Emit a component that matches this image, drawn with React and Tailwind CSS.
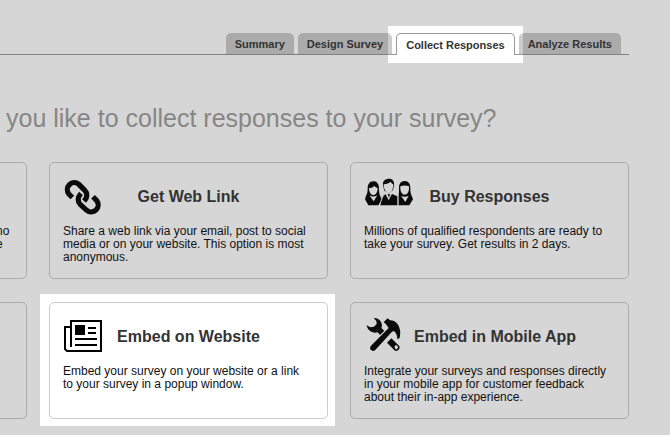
const tabs = [
  { id: "summary", label: "Summary" },
  { id: "design", label: "Design Survey" },
  { id: "collect", label: "Collect Responses" },
  { id: "analyze", label: "Analyze Results" },
];

function LinkIcon() {
  return (
    <svg className="h-[38px] w-[50px]" viewBox="0 0 50 38" fill="none" stroke="#0b0b0b" strokeWidth="5.2" aria-hidden="true">
      <path d="M9.3 19.5L5.9 16.1A7 7 0 0 1 15.8 6.3L21.8 12.3A7 7 0 0 1 21.8 22.1L21 23" />
      <path d="M30 18.8L33.6 22.5A7 7 0 0 1 23.7 32.3L17.2 26.3A7 7 0 0 1 17.2 16.5L18 15.6" />
    </svg>
  );
}

function PeopleIcon() {
  return (
    <svg className="h-[38px] w-[50px]" viewBox="27 24 150 114" fill="#0b0b0b" aria-hidden="true">
      {/* left */}
      <path d="M55 34C43 34 38 44 38 56C38 66 36 72 33 77L30 88L40 106H70L80 92L76 79C73 73 72 66 72 56C72 42 66 34 55 34Z" />
      <path d="M42 54C49 54 55 51 58 47C61 51 64 53 68 54C68 68 62 75 55 75C48 75 42 67 42 54Z" fill="#d6d6d6" />
      <path d="M43 76Q55 83 67 76L56 94Z" fill="#d6d6d6" />
      {/* right */}
      <path d="M149 33C137 33 132 42 132 54C132 66 132 72 130 77V106H163L174 88L170 77C167 72 166 66 166 54C166 42 161 33 149 33Z" />
      <path d="M136 49Q149 44 162 49C163 66 157 74 149 74C141 74 135 66 136 49Z" fill="#d6d6d6" />
      <path d="M138 77Q149 83 161 77L151 96Z" fill="#d6d6d6" />
      <path d="M129 74V107" stroke="#d6d6d6" strokeWidth="3" />
      {/* middle */}
      <path d="M76 106L80 82L92 72H111L127 79V106Z" />
      <path d="M84 46C82 32 91 26 102 26C113 26 119 34 117 48L114 60L102 70L88 62Z" />
      <path d="M86 43C96 42 102 39 106 35C109 39 112 41 115 43C115 59 109 69 101 69C93 69 86 59 86 43Z" fill="#d6d6d6" />
      <path d="M91 71L101 91L111 71L105 68H96Z" fill="#d6d6d6" />
      <path d="M98 72H105L102 83Z" />
      <path d="M84 78L73 106" stroke="#d6d6d6" strokeWidth="3" />
    </svg>
  );
}

function NewspaperIcon() {
  return (
    <svg className="h-[38px] w-[50px]" viewBox="0 0 50 38" fill="none" stroke="#000" strokeWidth="2" aria-hidden="true">
      <path d="M8 29V3H38V33H4L2 31V9H7" />
      <path d="M25 10H33M25 15H33M12 21H34M12 27H34" />
      <path d="M12 7H22V17H12Z" fill="#000" stroke="none" />
    </svg>
  );
}

function ToolsIcon() {
  return (
    <svg className="h-[38px] w-[50px]" viewBox="24 24 150 114" fill="#0b0b0b" aria-hidden="true">
      <path d="M53 24C66 23 78 33 78 47L76 54L85 62L72 75L65 67C50 71 34 62 32 46L43 52L54 50L62 42L61 33Z" />
      <path d="M93 98L106 85L129 107C135 114 126 125 117 122ZM118 106A5 6 0 1 0 124 116A6 6 0 0 0 118 106Z" fillRule="evenodd" />
      <path d="M83 36L95 25L102 31Q117 31 126 44Q136 59 131 84L124 88Q124 72 114 63L108 65L60 118Q54 126 46 121Q39 115 45 107L98 54L90 43Z" />
    </svg>
  );
}

const cards = [
  { id: "cut-top", lines: ["no", "e"] },
  {
    id: "link",
    title: "Get Web Link",
    icon: LinkIcon,
    text: "Share a web link via your email, post to social media or on your website. This option is most anonymous.",
  },
  {
    id: "buy",
    title: "Buy Responses",
    icon: PeopleIcon,
    text: "Millions of qualified respondents are ready to take your survey. Get results in 2 days.",
  },
  { id: "cut-bottom", lines: [] },
  {
    id: "website",
    title: "Embed on Website",
    icon: NewspaperIcon,
    text: "Embed your survey on your website or a link to your survey in a popup window.",
    spotlight: true,
  },
  {
    id: "mobile",
    title: "Embed in Mobile App",
    icon: ToolsIcon,
    text: "Integrate your surveys and responses directly in your mobile app for customer feedback about their in-app experience.",
  },
];

function Card({ card }) {
  const Icon = card.icon;

  // Cards on the left edge only show the end of their text
  if (card.lines) {
    return (
      <div className="min-h-[117px] rounded-[5px] border border-black/20 pt-[62px] pl-[247px] text-xs leading-[13px] text-[#111]">
        {card.lines.map((line) => (
          <p key={line}>{line}</p>
        ))}
      </div>
    );
  }

  return (
    <a href={`#${card.id}`} className="relative block min-h-[117px] rounded-[5px] border border-black/20 px-[13px] pt-[15px]">
      {card.spotlight && <span className="absolute -top-[9px] -right-2 -bottom-2 -left-[10px] -z-10 bg-white" />}
      <div className="grid grid-cols-[1fr_auto_1fr] items-center">
        <Icon />
        <h2 className="text-base font-bold whitespace-nowrap text-[#333]">{card.title}</h2>
      </div>
      <p className="mt-[9px] pr-1 text-xs leading-[13px] text-[#111]">{card.text}</p>
    </a>
  );
}

export default function App() {
  const activeTab = "collect";

  return (
    <div className="isolate min-h-screen overflow-hidden bg-[#d6d6d6] font-['Liberation_Sans',Arial,sans-serif]">
      <nav className="mr-[41px] flex items-end justify-end gap-1 border-b border-black/40 pt-[33px] pr-2 text-[11px] leading-[19px] font-bold whitespace-nowrap text-[#333]">
        {tabs.map((tab) =>
          tab.id === activeTab ? (
            <a key={tab.id} href={`#${tab.id}`} aria-current="page" className="relative -mb-px rounded-t-[5px] border border-b-0 border-[#999] bg-white px-[9px] pt-0.5">
              <span className="absolute -top-2 -right-[9px] -bottom-2 -left-[9px] -z-10 bg-white" />
              {tab.label}
            </a>
          ) : (
            <a key={tab.id} href={`#${tab.id}`} className="rounded-t-[5px] bg-black/20 px-[9px] pt-0.5">
              {tab.label}
            </a>
          )
        )}
      </nav>

      <main>
        <h1 className="mt-[48px] pl-[6px] text-[25px] leading-[30px] whitespace-nowrap text-[#868686]">
          you like to collect responses to your survey?
        </h1>
        <div className="mt-[29px] mr-[41px] -ml-[252px] grid grid-cols-3 gap-x-[22px] gap-y-[23px]">
          {cards.map((card) => (
            <Card key={card.id} card={card} />
          ))}
        </div>
      </main>
    </div>
  );
}
